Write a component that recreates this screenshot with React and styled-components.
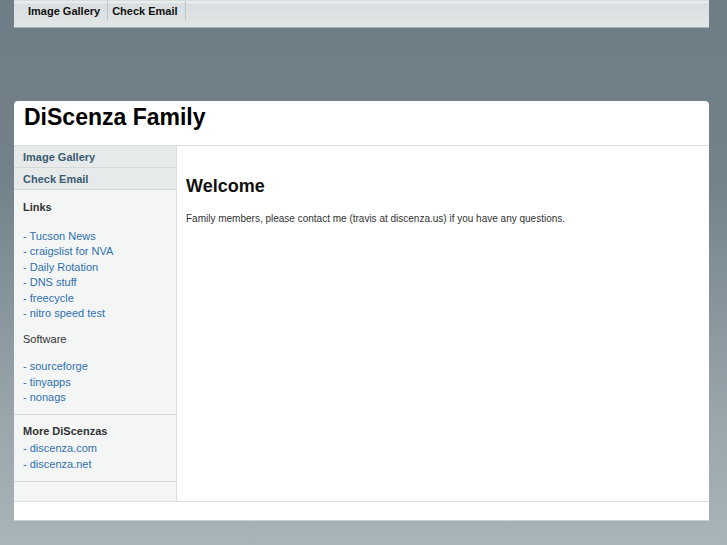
import styled, { createGlobalStyle } from "styled-components";

const GlobalStyle = createGlobalStyle`
  html, body {
    margin: 0;
    padding: 0;
  }
  body {
    min-height: 545px;
    background: linear-gradient(to bottom, #6f7e86 0px, #73828a 180px, #9aa6ac 420px, #a9b4b9 545px);
    font-family: "Liberation Sans", Arial, sans-serif;
  }
`;

const Page = styled.div`
  width: 695px;
  margin-left: 14px;
`;

const TopNav = styled.div`
  height: 27px;
  display: flex;
  align-items: flex-start;
  padding-left: 10px;
  background: linear-gradient(to bottom, #cfd5d8 0px, #f0f2f2 2px, #d9dee0 4px, #e3e7e8 28px);
  border-bottom: 1px solid #a3afb4;
`;

const NavItem = styled.a`
  display: flex;
  align-items: center;
  height: 19px;
  margin-top: 1px;
  padding: 0 7px 0 4px;
  border-right: 1px solid #b9c6cb;
  font-size: 11px;
  font-weight: bold;
  color: #111;
  text-decoration: none;
`;

const Spacer = styled.div`
  height: 73px;
`;

const Header = styled.div`
  height: 41px;
  padding: 3px 0 0 10px;
  background: #fff;
  border-radius: 4px 4px 0 0;
  border-bottom: 1px solid #dcdfe0;
`;

const Title = styled.h1`
  margin: 0;
  font-size: 23px;
  line-height: 26px;
  font-weight: bold;
  color: #000;
`;

const Main = styled.div`
  display: flex;
  background: #fff;
`;

const Sidebar = styled.div`
  width: 162px;
  background: #f4f6f6;
  border-right: 1px solid #dadede;
  padding-bottom: 19px;
`;

const SideTab = styled.a`
  display: flex;
  align-items: center;
  height: 21px;
  padding-left: 9px;
  background: #e7eaea;
  border-bottom: 1px solid #d4d9d9;
  font-size: 11px;
  font-weight: bold;
  color: #3a5b71;
  text-decoration: none;
`;

const Section = styled.div`
  padding: ${(p) => (p.$first ? "10px 9px 8px" : "9px 9px 9px")};
  border-bottom: 1px solid #d4d8d8;
  font-size: 11px;
  line-height: 15.5px;
`;

const Heading = styled.div`
  font-weight: ${(p) => (p.$plain ? "normal" : "bold")};
  color: #333;
  margin-bottom: ${(p) => p.$gap || "2px"};
`;

const LinkList = styled.div`
  margin-bottom: ${(p) => (p.$gap ? "10px" : "0")};
`;

const SideLink = styled.a`
  display: block;
  color: #2f6fae;
  text-decoration: none;
`;

const Content = styled.div`
  flex: 1;
  padding: 30px 9px 0 9px;
`;

const Welcome = styled.h2`
  margin: 0 0 16px 0;
  font-size: 18px;
  font-weight: bold;
  color: #111;
`;

const Para = styled.p`
  margin: 0;
  font-size: 10px;
  color: #333;
`;

const Footer = styled.div`
  height: 18px;
  background: #fff;
  border-top: 1px solid #dcdfe0;
  border-bottom: 1px solid #c9d0d3;
`;

const links = ["Tucson News", "craigslist for NVA", "Daily Rotation", "DNS stuff", "freecycle", "nitro speed test"];
const software = ["sourceforge", "tinyapps", "nonags"];
const more = ["discenza.com", "discenza.net"];

export default function App() {
  return (
    <>
      <GlobalStyle />
      <Page>
        <TopNav>
          <NavItem href="#">Image Gallery</NavItem>
          <NavItem href="#">Check Email</NavItem>
        </TopNav>
        <Spacer />
        <Header>
          <Title>DiScenza Family</Title>
        </Header>
        <Main>
          <Sidebar>
            <SideTab href="#">Image Gallery</SideTab>
            <SideTab href="#">Check Email</SideTab>
            <Section $first>
              <Heading $gap="13px">Links</Heading>
              <LinkList $gap>
                {links.map((l) => (
                  <SideLink href="#" key={l}>- {l}</SideLink>
                ))}
              </LinkList>
              <Heading $plain $gap="12px">Software</Heading>
              <LinkList>
                {software.map((l) => (
                  <SideLink href="#" key={l}>- {l}</SideLink>
                ))}
              </LinkList>
            </Section>
            <Section>
              <Heading>More DiScenzas</Heading>
              <LinkList>
                {more.map((l) => (
                  <SideLink href="#" key={l}>- {l}</SideLink>
                ))}
              </LinkList>
            </Section>
          </Sidebar>
          <Content>
            <Welcome>Welcome</Welcome>
            <Para>Family members, please contact me (travis at discenza.us) if you have any questions.</Para>
          </Content>
        </Main>
        <Footer />
      </Page>
    </>
  );
}
